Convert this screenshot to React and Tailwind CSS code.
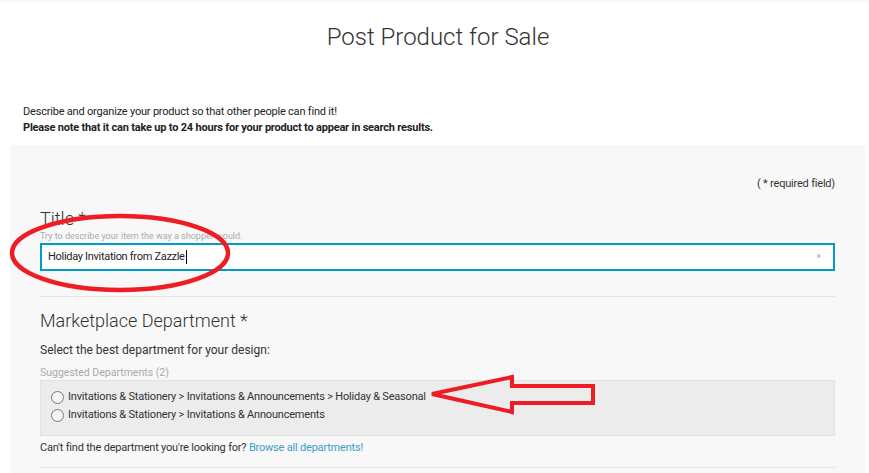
import React from 'react';

function Radio({ label }) {
  return (
    <label className="flex items-center gap-[4px] h-[18px]">
      <span className="w-[13px] h-[13px] rounded-full border border-[#777] bg-[#f4f4f4]" />
      <span>{label}</span>
    </label>
  );
}

export default function App() {
  return (
    <div className="relative w-[869px] h-[473px] overflow-hidden bg-white text-[#333] font-['Roboto',sans-serif]">
      <div className="h-[3px] bg-[#f9f9f9]" />

      <h1 className="mt-[20px] pl-[7px] text-center text-[24px] font-light leading-[28px] text-[#333]">
        Post Product for Sale
      </h1>

      <div className="mt-[53px] px-[23px] text-[11px] tracking-[-0.2px] leading-[16px] text-[#222]">
        <p>Describe and organize your product so that other people can find it!</p>
        <p className="font-bold">Please note that it can take up to 24 hours for your product to appear in search results.</p>
      </div>

      <div className="ml-[10px] mr-[4px] mt-[9px] bg-[#f8f8f8] px-[30px] pt-[32px] pb-[20px]">
        <p className="text-right text-[11px] tracking-[-0.2px] leading-[14px]">( * required field)</p>

        {/* Title */}
        <div className="mt-[18px]">
          <h2 className="text-[18px] font-light leading-[20px]">Title *</h2>
          <p className="mt-[1px] text-[9px] leading-[12px] text-[#aaa]">Try to describe your item the way a shopper would.</p>
          <div className="mt-[1px] flex items-center justify-between h-[28px] border-2 border-[#009cc4] bg-white pl-[6px] pr-[12px]">
            <span className="flex items-center text-[11px] tracking-[-0.3px] text-[#222]">
              Holiday Invitation from Zazzle
              <span className="ml-[1px] w-[1px] h-[14px] bg-black" />
            </span>
            <span className="text-[9px] text-[#999]">×</span>
          </div>
        </div>

        <div className="mt-[25px] h-[1px] bg-[#e2e2e2]" />

        {/* Marketplace Department */}
        <div className="mt-[14px]">
          <h2 className="text-[18px] font-light leading-[20px]">Marketplace Department *</h2>
          <p className="mt-[11px] text-[12px] leading-[16px]">Select the best department for your design:</p>
          <p className="mt-[8px] text-[10.5px] leading-[14px] text-[#aaa]">Suggested Departments (2)</p>
          <div className="h-[56px] border border-[#e2e2e2] bg-[#ececec] pl-[10px] pt-[7px] text-[11px] tracking-[-0.2px]">
            <Radio label="Invitations & Stationery > Invitations & Announcements > Holiday & Seasonal" />
            <Radio label="Invitations & Stationery > Invitations & Announcements" />
          </div>
          <p className="mt-[5px] text-[11px] tracking-[-0.2px] leading-[14px]">
            Can't find the department you're looking for? <a className="text-[#3aa0c8]">Browse all departments!</a>
          </p>
          <div className="mt-[12px] h-[1px] bg-[#e2e2e2]" />
        </div>
      </div>

      {/* red annotations */}
      <svg className="absolute left-0 top-0 pointer-events-none" width="869" height="473">
        <ellipse cx="120" cy="253" rx="108" ry="37" fill="none" stroke="#ee1c24" strokeWidth="4.5" />
        <path d="M432 394 L512 377 L512 386 L593 386 L593 403 L512 403 L512 412 Z" fill="none" stroke="#ee1c24" strokeWidth="4" strokeLinejoin="miter" />
      </svg>
    </div>
  );
}
